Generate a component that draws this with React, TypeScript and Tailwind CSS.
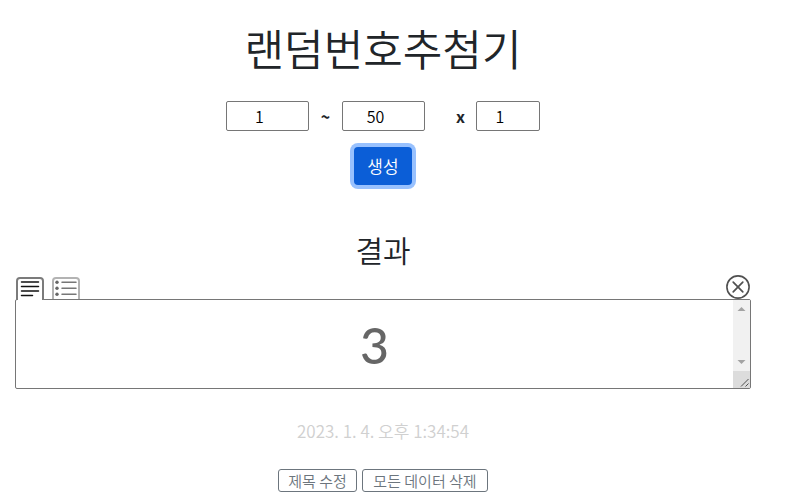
import { useState } from 'react';
import { clsx } from 'clsx';

interface NumberFieldProps {
  label: string;
  value: string;
  onChange: (value: string) => void;
  className: string;
}

function NumberField({ label, value, onChange, className }: NumberFieldProps) {
  return (
    <input
      type="text"
      inputMode="numeric"
      aria-label={label}
      value={value}
      onChange={(e) => onChange(e.target.value)}
      className={clsx(
        'h-[30px] rounded-xs border border-[#767676] bg-white pr-4 text-center text-base leading-6 font-[350] text-black',
        className
      )}
    />
  );
}

// One pixel taller than the list tab so that it covers the box border below it
function ParagraphIcon() {
  return (
    <svg width="28" height="23" viewBox="0 0 28 23" fill="none" className="block">
      <path d="M1 23V4a3 3 0 0 1 3-3h20a3 3 0 0 1 3 3v19" fill="#fff" stroke="#7b7b7b" strokeWidth="2" />
      <path d="M5.5 5h17M5.5 9.5h17M5.5 14h17M5.5 18.5h11" stroke="#111" strokeWidth="1.5" strokeLinecap="round" />
    </svg>
  );
}

function ListIcon() {
  return (
    <svg width="28" height="22" viewBox="0 0 28 22" fill="none" className="block">
      <path d="M1 22V4a3 3 0 0 1 3-3h20a3 3 0 0 1 3 3v18" stroke="#b3b3b3" strokeWidth="2" />
      <path d="M10 5.25h14M10 11.25h14M10 17.25h14" stroke="#777" strokeWidth="1.5" strokeLinecap="round" />
      <circle cx="5" cy="5.25" r="1.7" fill="#666" />
      <circle cx="5" cy="11.25" r="1.7" fill="#666" />
      <circle cx="5" cy="17.25" r="1.7" fill="#666" />
    </svg>
  );
}

function ClearIcon() {
  return (
    <svg width="24" height="24" viewBox="0 0 24 24" fill="none" stroke="#505050" className="block">
      <circle cx="12" cy="12" r="11.1" strokeWidth="1.6" />
      <path d="m7.2 7.2 9.6 9.6M16.8 7.2l-9.6 9.6" strokeWidth="1.7" strokeLinecap="round" />
    </svg>
  );
}

// Scroll track with its arrows and the resize grip at the bottom
function ScrollTrack() {
  return (
    <div aria-hidden="true" className="pointer-events-none absolute inset-y-px right-px flex w-[17px] flex-col justify-between bg-[#f1f1f1]">
      <svg width="17" height="17" viewBox="0 0 17 17" className="block">
        <path d="M8.5 7 12.5 11h-8z" fill="#a3a3a3" />
      </svg>
      <div>
        <svg width="17" height="17" viewBox="0 0 17 17" className="block">
          <path d="M4.5 6h8l-4 4z" fill="#a3a3a3" />
        </svg>
        <svg width="17" height="17" viewBox="0 0 17 17" className="block bg-[#dcdcdc]">
          <path d="m8 15.5 7.5-7.5M12.5 15.5l3-3" stroke="#505050" strokeWidth="1" />
        </svg>
      </div>
    </div>
  );
}

const outlineButton =
  'h-[23px] rounded-[3px] border border-[#6c757d] text-[15px] leading-5 font-[350] whitespace-nowrap text-[#6c757d]';

export default function App() {
  const [min, setMin] = useState('1');
  const [max, setMax] = useState('50');
  const [count, setCount] = useState('1');
  const [result, setResult] = useState('3');

  const generate = () => {
    const low = Number(min);
    const high = Number(max);
    const picks = Array.from({ length: Number(count) }, () => low + Math.floor(Math.random() * (high - low + 1)));
    setResult(picks.join(' '));
  };

  return (
    <main className="bg-white pt-4 pr-[34px] pb-1 pl-[15px] text-center font-['Noto_Sans_CJK_KR',sans-serif] text-[#212529]">
      <h1 className="text-[43px] leading-[62px] font-[350]">랜덤번호추첨기</h1>

      <div className="mt-[23px] flex items-center justify-center">
        <NumberField label="최소" value={min} onChange={setMin} className="w-[83px]" />
        <span className="w-[33px] font-bold">~</span>
        <NumberField label="최대" value={max} onChange={setMax} className="w-[83px]" />
        <span className="w-[51px] pl-5 font-bold">x</span>
        <NumberField label="개수" value={count} onChange={setCount} className="w-16" />
      </div>

      <button
        type="button"
        onClick={generate}
        className="mt-4 h-[38px] rounded bg-[#0b5ed7] px-[13px] text-[17px] leading-6 font-[350] text-white ring-4 ring-[#98c1fe]"
      >
        생성
      </button>

      <h2 className="mt-[46px] text-[30px] leading-9 font-[350]">결과</h2>

      <div className="mt-2 flex items-end justify-between">
        <div className="flex items-end gap-2 pl-px">
          <button type="button" aria-label="문단 보기" className="relative z-10 -mb-px">
            <ParagraphIcon />
          </button>
          <button type="button" aria-label="목록 보기">
            <ListIcon />
          </button>
        </div>
        <button type="button" aria-label="지우기" className="mr-px">
          <ClearIcon />
        </button>
      </div>

      <div className="relative">
        <textarea
          readOnly
          aria-label="결과"
          value={result}
          className="block h-[90px] w-full resize-none overflow-hidden rounded-xs border border-[#767676] py-2 pr-[17px] text-center font-[Lato,sans-serif] text-[50px] leading-[75px] font-medium text-[#666]"
        />
        <ScrollTrack />
      </div>

      <p className="mt-[30px] text-[17px] leading-6 font-[350] text-[#d0d0d0]">2023. 1. 4. 오후 1:34:54</p>

      <div className="mt-[26px] flex justify-center gap-[5px]">
        <button type="button" className={clsx(outlineButton, 'w-[79px]')}>
          제목 수정
        </button>
        <button type="button" className={clsx(outlineButton, 'w-[126px]')}>
          모든 데이터 삭제
        </button>
      </div>
    </main>
  );
}
